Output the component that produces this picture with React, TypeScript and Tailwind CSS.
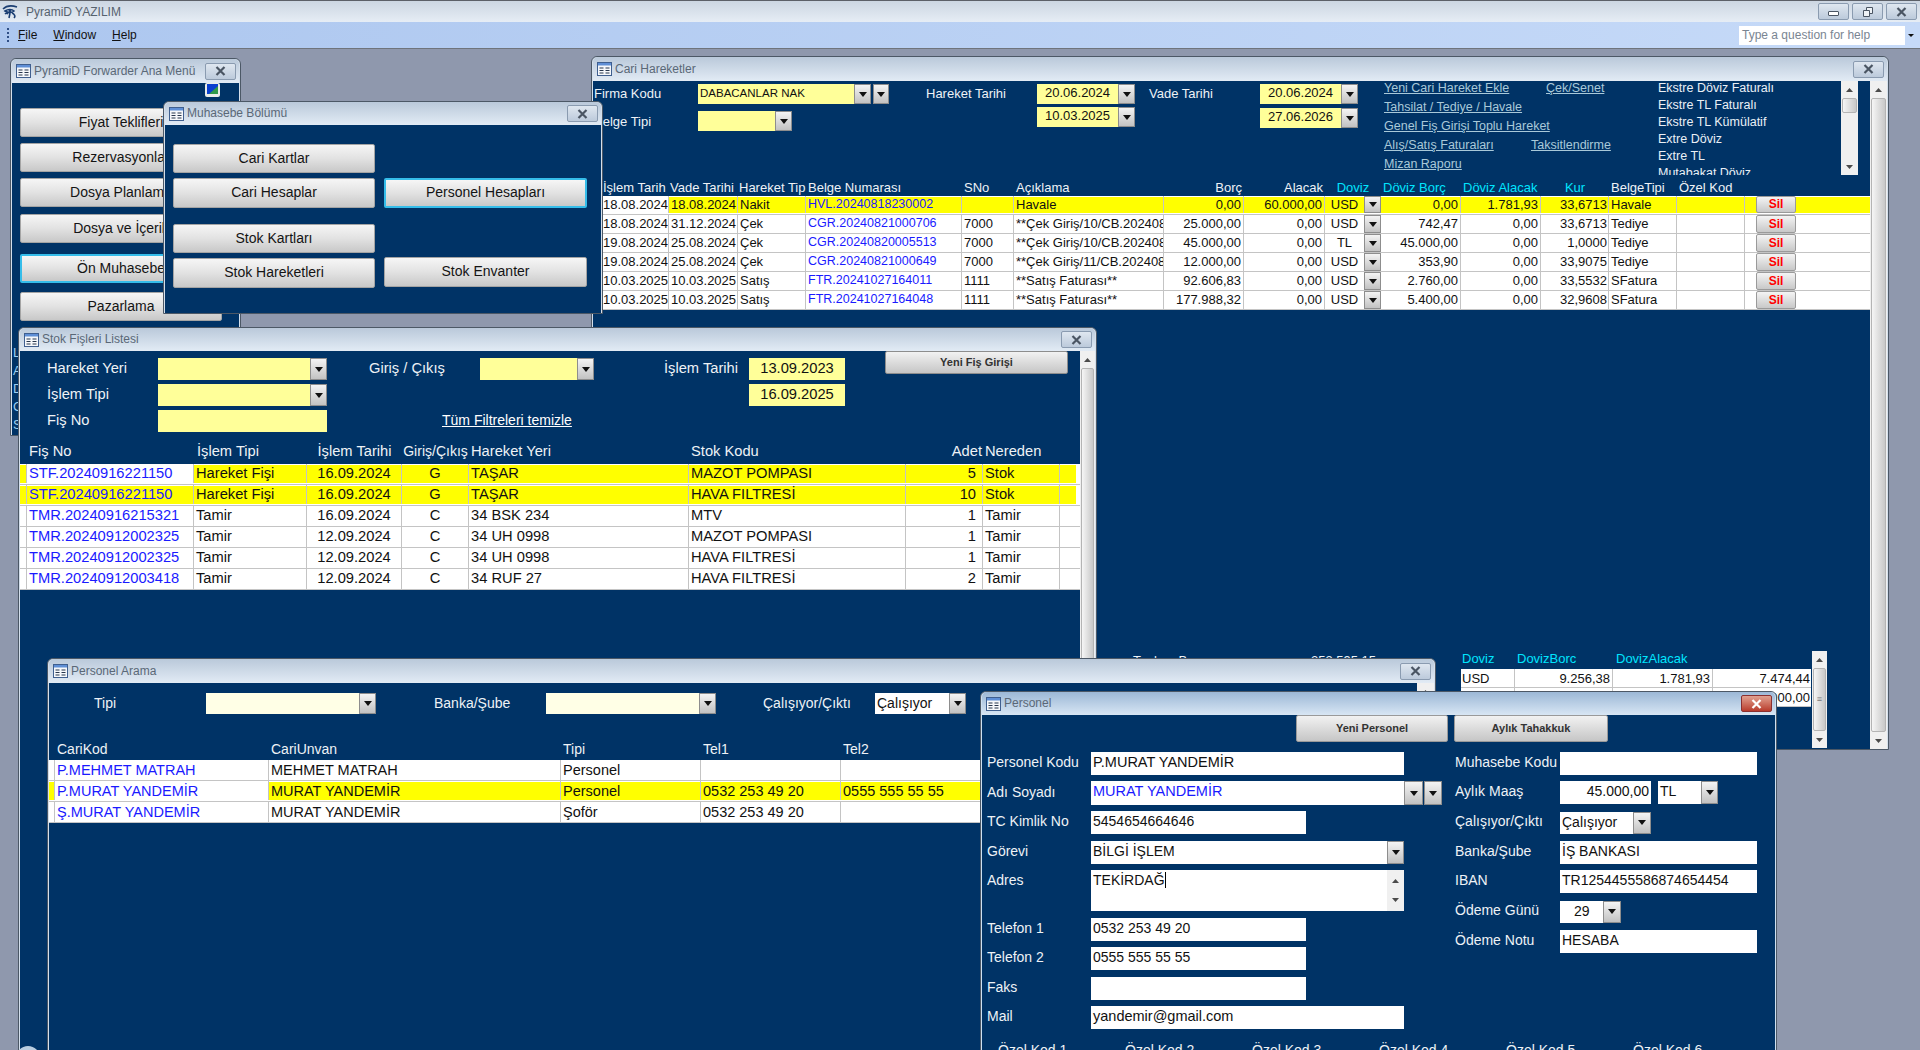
import type { ReactNode } from 'react';

const line = 'border-r border-[#c4c4c4]';

function Tri() {
    return (
        <svg width="8" height="5" viewBox="0 0 8 5">
            <path d="M0 0h8L4 5z" fill="#111" />
        </svg>
    );
}

function Drop({ className = 'w-[17px]' }: { className?: string }) {
    return (
        <div className={`flex shrink-0 items-center justify-center border border-[#8d8d8d] bg-gradient-to-b from-[#f4f4f4] to-[#c2c2c2] ${className}`}>
            <Tri />
        </div>
    );
}

function FormIcon() {
    return (
        <svg width="15" height="14" viewBox="0 0 15 14" className="shrink-0">
            <rect x="0.5" y="0.5" width="14" height="13" fill="#f6f8fb" stroke="#3f5f8f" />
            <rect x="1" y="1" width="13" height="2.5" fill="#5f8fd6" />
            <path d="M2.5 6h4M2.5 8.5h4M2.5 11h4M8.5 6h4M8.5 8.5h4M8.5 11h4" stroke="#27364d" />
        </svg>
    );
}

function AppIcon() {
    return (
        <svg width="16" height="14" viewBox="0 0 16 14">
            <path d="M1 4c3-3 8-4 14-2M3 6c3-2 7-2 9 0-2 2-6 2-9 0zM8 8l-1 5M10 8c2 1 4 3 2 5M3 9c1-1 2-1 3 0" fill="none" stroke="#1c3f73" strokeWidth="1.6" />
            <circle cx="8" cy="6" r="1.4" fill="#1c3f73" />
        </svg>
    );
}

function CloseBtn({ danger }: { danger?: boolean }) {
    return (
        <div className={`flex h-[17px] w-[31px] items-center justify-center rounded-[2px] border ${danger ? 'border-[#8a3030] bg-gradient-to-b from-[#e0a090] to-[#b83a2c]' : 'border-[#8a9bb0] bg-gradient-to-b from-[#dfe7f0] to-[#bccadb]'}`}>
            <svg width="11" height="10" viewBox="0 0 11 10">
                <path d="M1.5 1l8 8M9.5 1l-8 8" stroke={danger ? '#ffffff' : '#4a5563'} strokeWidth="2.2" />
            </svg>
        </div>
    );
}

function Win({ className, title, titleClass = 'h-[24px]', active, children }: { className: string; title: string; titleClass?: string; active?: boolean; children: ReactNode }) {
    return (
        <div className={`absolute flex flex-col rounded-t-[6px] border border-[#4c5866] px-px ${active ? 'bg-[#cfe0f0]' : 'bg-[#d4dfeb]'} ${className}`}>
            <div className={`flex shrink-0 items-center gap-[3px] rounded-t-[5px] bg-gradient-to-b pl-[4px] pr-[3px] text-[12px] text-[#5a6877] ${active ? 'from-[#9cb8d6] to-[#d8e6f4]' : 'from-[#bac9da] to-[#e2ebf5]'} ${titleClass}`}>
                <FormIcon />
                <span className="flex-1 pb-px">{title}</span>
                <CloseBtn danger={active} />
            </div>
            <div className="flex min-h-0 flex-1 overflow-hidden bg-[#003366]">{children}</div>
        </div>
    );
}

function Btn({ label, className, focus }: { label: string; className: string; focus?: boolean }) {
    return (
        <div className={`flex items-center justify-center overflow-hidden whitespace-nowrap rounded-[2px] bg-gradient-to-b from-[#f6f6f6] via-[#e2e2e2] to-[#c8c8c8] pb-px text-[14px] text-[#141414] ${focus ? 'border-2 border-[#35bdea]' : 'border border-[#a4a4a4]'} ${className}`}>
            {label}
        </div>
    );
}

function VScroll({ className, thumbClass, grip }: { className: string; thumbClass: string; grip?: boolean }) {
    return (
        <div className={`flex shrink-0 flex-col bg-[#f0f0f0] ${className}`}>
            <div className="flex h-[17px] shrink-0 items-center justify-center">
                <svg width="7" height="4" viewBox="0 0 7 4"><path d="M0 4h7L3.5 0z" fill="#4a4a4a" /></svg>
            </div>
            <div className="min-h-0 flex-1 px-px">
                <div className={`flex items-center justify-center rounded-[2px] border border-[#b4b4b4] bg-gradient-to-r from-[#f6f6f6] to-[#c8c8c8] text-[9px] leading-none text-[#777] ${thumbClass}`}>
                    {grip ? '≡' : ''}
                </div>
            </div>
            <div className="flex h-[17px] shrink-0 items-center justify-center">
                <svg width="7" height="4" viewBox="0 0 7 4"><path d="M0 0h7L3.5 4z" fill="#4a4a4a" /></svg>
            </div>
        </div>
    );
}

function Combo({ className, children, dropClass }: { className: string; children?: ReactNode; dropClass?: string }) {
    return (
        <div className={`flex overflow-hidden whitespace-nowrap ${className}`}>
            <div className="min-w-0 flex-1 overflow-hidden pl-[2px]">{children}</div>
            <Drop className={dropClass} />
        </div>
    );
}

function Row({ cols, h, hi, white = [], cells, cls }: { cols: string; h: string; hi?: boolean; white?: number[]; cells: ReactNode[]; cls: string[] }) {
    return (
        <div className={`border-b border-[#c4c4c4] bg-white ${h} ${hi ? 'py-px' : ''}`}>
            <div className={`grid h-full text-[#111] ${cols} ${hi ? 'bg-[#ffff00]' : 'bg-white'}`}>
                {cells.map((c, i) => (
                    <div key={i} className={`overflow-hidden whitespace-nowrap ${cls[i]} ${white.includes(i) ? 'bg-white' : ''} ${hi ? '-mt-px' : ''}`}>
                        {c}
                    </div>
                ))}
            </div>
        </div>
    );
}

const mainButtons = [
    { label: 'Fiyat Teklifleri', cls: 'mt-0' },
    { label: 'Rezervasyonlar', cls: 'mt-[6px]' },
    { label: 'Dosya Planlama', cls: 'mt-[6px]' },
    { label: 'Dosya ve İçerik', cls: 'mt-[7px]' },
    { label: 'Ön Muhasebe', cls: 'mt-[11px]', focus: true },
    { label: 'Pazarlama', cls: 'mt-[9px]' },
];

const cariCols = 'grid-cols-[67px_69px_68px_156px_52px_150px_80px_81px_39px_17px_80px_80px_68px_68px_68px_11px_40px_1fr]';
const cariCls = [
    `${line} pl-px`, `${line} pl-[2px]`, `${line} pl-[2px]`, `${line} pl-[2px] text-[12.5px] text-[#1a1aff]`, `${line} pl-[2px]`, `${line} pl-[2px]`,
    `${line} pr-[2px] text-right`, `${line} pr-[2px] text-right`, 'text-center', '', `${line} pr-[2px] text-right`, `${line} pr-[2px] text-right`,
    `${line} pr-px text-right`, `${line} pl-[2px]`, `${line}`, '', '', '',
];
const cariRows = [
    ['18.08.2024', '18.08.2024', 'Nakit', 'HVL.20240818230002', '', 'Havale', '0,00', '60.000,00', 'USD', '0,00', '1.781,93', '33,6713', 'Havale'],
    ['18.08.2024', '31.12.2024', 'Çek', 'CGR.20240821000706', '7000', '**Çek Giriş/10/CB.202408', '25.000,00', '0,00', 'USD', '742,47', '0,00', '33,6713', 'Tediye'],
    ['19.08.2024', '25.08.2024', 'Çek', 'CGR.20240820005513', '7000', '**Çek Giriş/10/CB.202408', '45.000,00', '0,00', 'TL', '45.000,00', '0,00', '1,0000', 'Tediye'],
    ['19.08.2024', '25.08.2024', 'Çek', 'CGR.20240821000649', '7000', '**Çek Giriş/11/CB.202408', '12.000,00', '0,00', 'USD', '353,90', '0,00', '33,9075', 'Tediye'],
    ['10.03.2025', '10.03.2025', 'Satış', 'FTR.20241027164011', '1111', '**Satış Faturası**', '92.606,83', '0,00', 'USD', '2.760,00', '0,00', '33,5532', 'SFatura'],
    ['10.03.2025', '10.03.2025', 'Satış', 'FTR.20241027164048', '1111', '**Satış Faturası**', '177.988,32', '0,00', 'USD', '5.400,00', '0,00', '32,9608', 'SFatura'],
];
const extreList = ['Ekstre Döviz Faturalı', 'Ekstre TL Faturalı', 'Ekstre TL Kümülatif', 'Extre Döviz', 'Extre TL', 'Mutabakat Döviz'];

const stokCols = 'grid-cols-[7px_167px_113px_95px_67px_220px_217px_77px_77px_16px_4px]';
const stokCls = [
    line, `${line} pl-[2px] text-[#1a1aff]`, `${line} pl-[2px]`, `${line} text-center`, `${line} text-center`, `${line} pl-[2px]`,
    `${line} pl-[2px]`, `${line} pr-[6px] text-right`, `${line} pl-[2px]`, '', '',
];
const stokRows = [
    ['', 'STF.20240916221150', 'Hareket Fişi', '16.09.2024', 'G', 'TAŞAR', 'MAZOT POMPASI', '5', 'Stok'],
    ['', 'STF.20240916221150', 'Hareket Fişi', '16.09.2024', 'G', 'TAŞAR', 'HAVA FILTRESİ', '10', 'Stok'],
    ['', 'TMR.20240916215321', 'Tamir', '16.09.2024', 'C', '34 BSK 234', 'MTV', '1', 'Tamir'],
    ['', 'TMR.20240912002325', 'Tamir', '12.09.2024', 'C', '34 UH 0998', 'MAZOT POMPASI', '1', 'Tamir'],
    ['', 'TMR.20240912002325', 'Tamir', '12.09.2024', 'C', '34 UH 0998', 'HAVA FILTRESİ', '1', 'Tamir'],
    ['', 'TMR.20240912003418', 'Tamir', '12.09.2024', 'C', '34 RUF 27', 'HAVA FILTRESİ', '2', 'Tamir'],
];

const aramaCols = 'grid-cols-[6px_214px_292px_140px_140px_1fr]';
const aramaCls = [line, `${line} pl-[2px] text-[#1a1aff]`, `${line} pl-[2px]`, `${line} pl-[2px]`, `${line} pl-[2px]`, 'pl-[2px]'];
const aramaRows = [
    ['', 'P.MEHMET MATRAH', 'MEHMET MATRAH', 'Personel', '', ''],
    ['', 'P.MURAT YANDEMİR', 'MURAT YANDEMİR', 'Personel', '0532 253 49 20', '0555 555 55 55'],
    ['', 'Ş.MURAT YANDEMİR', 'MURAT YANDEMİR', 'Şoför', '0532 253 49 20', ''],
];

const field = 'flex h-[23px] items-center bg-white pb-[2px] pl-[2px] text-[#111]';

function AnaMenu() {
    return (
        <Win className="left-[10px] top-[9px] h-[378px] w-[231px]" title="PyramiD Forwarder Ana Menü">
            <div className="flex w-full flex-col pl-[8px]">
                <div className="h-[25px] pl-[185px]">
                    <svg width="15" height="14" viewBox="0 0 15 14">
                        <rect width="15" height="14" rx="2" fill="#e8ece8" />
                        <rect x="2" y="1" width="11" height="10" fill="#0a3fd0" />
                        <path d="M13 3v8H4z" fill="#2f9a4a" />
                    </svg>
                </div>
                {mainButtons.map((b) => (
                    <Btn key={b.label} label={b.label} focus={b.focus} className={`h-[29px] w-[202px] ${b.cls}`} />
                ))}
                <div className="-ml-[8px] mt-[23px] flex flex-col text-[13px] leading-[18px] text-[#9fd0f0]">
                    {['L', 'A', 'D', 'G', 'S'].map((l) => (
                        <span key={l} className="pl-px">{l}</span>
                    ))}
                </div>
            </div>
        </Win>
    );
}

function Muhasebe() {
    return (
        <Win className="left-[163px] top-[52px] h-[213px] w-[440px]" title="Muhasebe Bölümü" titleClass="h-[23px]">
            <div className="flex flex-col pl-[8px] pt-[19px]">
                <Btn label="Cari Kartlar" className="h-[29px] w-[202px]" />
                <div className="mt-[5px] flex gap-[9px]">
                    <Btn label="Cari Hesaplar" className="h-[30px] w-[202px]" />
                    <Btn label="Personel Hesapları" focus className="h-[30px] w-[203px]" />
                </div>
                <Btn label="Stok Kartları" className="mt-[16px] h-[29px] w-[202px]" />
                <div className="mt-[4px] flex items-start gap-[9px]">
                    <Btn label="Stok Hareketleri" className="mt-px h-[30px] w-[202px]" />
                    <Btn label="Stok Envanter" className="h-[30px] w-[203px]" />
                </div>
            </div>
        </Win>
    );
}

function CariHareketler() {
    const linkCls = 'underline text-[#a9c9d9]';
    return (
        <Win className="left-[591px] top-[7px] h-[694px] w-[1298px]" title="Cari Hareketler">
            <div className="flex min-w-0 flex-1 flex-col text-[13px]">
                <div className="flex h-[94px] shrink-0 text-[#eef2f6]">
                    <div className="w-[105px] pl-px">
                        <div className="mt-[3px]">Firma Kodu</div>
                        <div className="mt-[8px]">Belge Tipi</div>
                    </div>
                    <div className="w-[228px] pt-[3px] text-[#111]">
                        <div className="flex h-[20px] w-[191px]">
                            <div className="flex-1 overflow-hidden whitespace-nowrap bg-[#ffff99] pl-[2px] text-[11.5px] leading-[19px]">DABACANLAR NAK</div>
                            <Drop />
                            <Drop className="ml-[2px] w-[16px]" />
                        </div>
                        <Combo className="mt-[7px] h-[20px] w-[94px] bg-[#ffff99]" />
                    </div>
                    <div className="w-[111px] pt-[3px]">Hareket Tarihi</div>
                    <div className="w-[112px] pt-[3px] text-[#111]">
                        <Combo className="h-[20px] w-[98px] bg-[#ffff99] pl-[6px] leading-[18px]">20.06.2024</Combo>
                        <Combo className="mt-[3px] h-[20px] w-[98px] bg-[#ffff99] pl-[6px] leading-[18px]">10.03.2025</Combo>
                    </div>
                    <div className="w-[111px] pt-[3px]">Vade Tarihi</div>
                    <div className="w-[124px] pt-[3px] text-[#111]">
                        <Combo className="h-[20px] w-[98px] bg-[#ffff99] pl-[6px] leading-[18px]">20.06.2024</Combo>
                        <Combo className="mt-[4px] h-[20px] w-[98px] bg-[#ffff99] pl-[6px] leading-[18px]">27.06.2026</Combo>
                    </div>
                    <div className="-mt-[2px] flex w-[274px] flex-col text-[12.5px] leading-[19px]">
                        <div className="flex">
                            <span className={`w-[162px] ${linkCls}`}>Yeni Cari Hareket Ekle</span>
                            <span className={linkCls}>Çek/Senet</span>
                        </div>
                        <span className={linkCls}>Tahsilat / Tediye / Havale</span>
                        <span className={linkCls}>Genel Fiş Girişi Toplu Hareket</span>
                        <div className="flex">
                            <span className={`w-[147px] ${linkCls}`}>Alış/Satış Faturaları</span>
                            <span className={linkCls}>Taksitlendirme</span>
                        </div>
                        <span className={linkCls}>Mizan Raporu</span>
                    </div>
                    <div className="flex h-[94px] w-[183px] flex-col overflow-hidden text-[12.5px] leading-[17px] text-[#eaf0f6]">
                        {extreList.map((t) => (
                            <span key={t} className="-mt-px mb-px whitespace-nowrap">{t}</span>
                        ))}
                    </div>
                    <VScroll className="h-[94px] w-[17px]" thumbClass="h-[15px]" />
                </div>
                <div className={`ml-[9px] grid h-[21px] shrink-0 items-end leading-[16px] text-[#eef2f6] ${cariCols}`}>
                    <span className="pl-px">İşlem Tarih</span>
                    <span className="overflow-hidden whitespace-nowrap pl-px">Vade Tarihi</span>
                    <span className="overflow-hidden whitespace-nowrap pl-px">Hareket Tip</span>
                    <span className="pl-[2px]">Belge Numarası</span>
                    <span className="pl-[2px]">SNo</span>
                    <span className="pl-[2px]">Açıklama</span>
                    <span className="pr-[2px] text-right">Borç</span>
                    <span className="pr-[2px] text-right">Alacak</span>
                    <span className="col-span-2 text-center text-[#00e5ff]">Doviz</span>
                    <span className="pl-[2px] text-[#00e5ff]">Döviz Borç</span>
                    <span className="pl-[2px] text-[#00e5ff]">Döviz Alacak</span>
                    <span className="text-center text-[#00e5ff]">Kur</span>
                    <span className="pl-[2px]">BelgeTipi</span>
                    <span className="pl-[2px]">Özel Kod</span>
                </div>
                <div className="ml-[9px] shrink-0 leading-[17px]">
                    {cariRows.map((r, i) => {
                        const cells: ReactNode[] = [
                            ...r.slice(0, 9),
                            <Drop key="d" className="h-full w-[17px]" />,
                            ...r.slice(9),
                            '',
                            '',
                            <div key="s" className="flex h-full items-center justify-center rounded-[2px] border border-[#9a9a9a] bg-gradient-to-b from-[#f4f4f4] to-[#c8c8c8] text-[12px] font-bold text-[#ff0000]">Sil</div>,
                            '',
                        ];
                        return <Row key={i} cols={cariCols} h="h-[19px]" hi={i === 0} white={[0]} cells={cells} cls={cariCls} />;
                    })}
                </div>
                <div className="mt-[341px] flex h-[97px] shrink-0 text-[#eef2f6]">
                    <span className="ml-[540px] w-[178px]">Toplam Borç</span>
                    <span className="w-[150px]">253.595,15</span>
                    <div className="w-[350px]">
                        <div className="grid h-[18px] grid-cols-[54px_98px_100px_98px] leading-[16px] text-[#00e5ff]">
                            <span className="pl-px">Doviz</span>
                            <span className="pl-[2px]">DovizBorc</span>
                            <span className="pl-[3px]">DovizAlacak</span>
                            <span />
                        </div>
                        <Row cols="grid-cols-[54px_98px_100px_98px]" h="h-[19px]" cells={['USD', '9.256,38', '1.781,93', '7.474,44']} cls={[`${line} pl-px`, `${line} pr-[2px] text-right`, `${line} pr-[2px] text-right`, 'pr-px text-right']} />
                        <Row cols="grid-cols-[54px_98px_100px_98px]" h="h-[19px]" cells={['', '', '', '45.000,00']} cls={[line, line, line, 'pr-px text-right']} />
                    </div>
                    <VScroll className="ml-px h-[97px] w-[15px]" thumbClass="h-full" grip />
                </div>
            </div>
            <VScroll className="w-[17px]" thumbClass="h-full" />
        </Win>
    );
}

function StokFisleri() {
    return (
        <Win className="left-[18px] top-[278px] h-[800px] w-[1079px]" title="Stok Fişleri Listesi" titleClass="h-[23px]">
            <div className="flex min-w-0 flex-1 flex-col text-[14.7px]">
                <div className="grid auto-rows-[22px] grid-cols-[111px_169px_42px_111px_114px_70px_85px_96px_40px_183px] items-center gap-y-[4px] pl-[27px] pt-[7px] text-[#eef2f6]">
                    <span className="pb-[2px]">Hareket Yeri</span>
                    <Combo className="h-[22px] bg-[#ffff99]" />
                    <span className="col-start-4 pb-[2px]">Giriş / Çıkış</span>
                    <Combo className="h-[22px] bg-[#ffff99]" />
                    <span className="col-start-7 pb-[2px]">İşlem Tarihi</span>
                    <div className="flex h-[22px] items-center justify-center bg-[#ffff99] pb-[2px] text-[#111]">13.09.2023</div>
                    <div className="col-start-10 -mt-[7px] flex h-[23px] self-start items-center justify-center rounded-[2px] border border-[#8d8d8d] bg-gradient-to-b from-[#f2f2f2] to-[#c6c6c6] text-[11px] font-bold text-[#333]">Yeni Fiş Girişi</div>
                    <span className="col-start-1 pb-[2px]">İşlem Tipi</span>
                    <Combo className="col-start-2 h-[22px] bg-[#ffff99]" />
                    <div className="col-start-8 flex h-[22px] items-center justify-center bg-[#ffff99] pb-[2px] text-[#111]">16.09.2025</div>
                    <span className="col-start-1 pb-[2px]">Fiş No</span>
                    <div className="col-start-2 h-[22px] bg-[#ffff99]" />
                    <span className="col-span-3 col-start-4 pb-[2px] pl-[73px] text-[14px] text-white underline">Tüm Filtreleri temizle</span>
                </div>
                <div className={`mt-[8px] grid h-[24px] shrink-0 items-center pb-[2px] text-[#eef2f6] ${stokCols}`}>
                    <span />
                    <span className="pl-[2px]">Fiş No</span>
                    <span className="pl-[3px]">İşlem Tipi</span>
                    <span className="text-center">İşlem Tarihi</span>
                    <span className="overflow-hidden whitespace-nowrap text-center text-[14px]">Giriş/Çıkış</span>
                    <span className="pl-[2px]">Hareket Yeri</span>
                    <span className="pl-[2px]">Stok Kodu</span>
                    <span className="pr-px text-right">Adet</span>
                    <span className="whitespace-nowrap pl-[2px]">Nereden</span>
                </div>
                <div className="shrink-0 leading-[18px]">
                    {stokRows.map((r, i) => (
                        <Row key={i} cols={stokCols} h="h-[21px]" hi={i < 2} white={i === 0 ? [1, 10] : i === 1 ? [10] : []} cells={[...r, '', '']} cls={stokCls} />
                    ))}
                </div>
            </div>
            <VScroll className="w-[15px]" thumbClass="h-full" />
        </Win>
    );
}

function PersonelArama() {
    return (
        <Win className="left-[47px] top-[609px] h-[420px] w-[1389px]" title="Personel Arama">
            <div className="flex min-w-0 flex-1 flex-col text-[14px]">
                <div className="mt-[10px] flex h-[21px] shrink-0 items-center text-[#eef2f6]">
                    <span className="ml-[45px] w-[112px]">Tipi</span>
                    <Combo className="h-[21px] w-[170px] bg-[#ffffe6]" />
                    <span className="ml-[58px] w-[112px]">Banka/Şube</span>
                    <Combo className="h-[21px] w-[170px] bg-[#ffffe6]" />
                    <span className="ml-[47px] w-[112px]">Çalışıyor/Çıktı</span>
                    <Combo className="h-[21px] w-[91px] bg-white leading-[20px] text-[#111]">Çalışıyor</Combo>
                </div>
                <div className={`mt-[25px] grid h-[21px] shrink-0 items-center text-[#eef2f6] ${aramaCols}`}>
                    <span />
                    <span className="pl-[2px]">CariKod</span>
                    <span className="pl-[2px]">CariUnvan</span>
                    <span className="pl-[2px]">Tipi</span>
                    <span className="pl-[2px]">Tel1</span>
                    <span className="pl-[2px]">Tel2</span>
                </div>
                <div className="shrink-0 text-[14.5px] leading-[20px]">
                    {aramaRows.map((r, i) => (
                        <Row key={i} cols={aramaCols} h="h-[21px]" hi={i === 1} white={i === 1 ? [1] : []} cells={r} cls={aramaCls} />
                    ))}
                </div>
            </div>
            <VScroll className="w-[17px]" thumbClass="h-full" />
        </Win>
    );
}

function Label({ children }: { children: ReactNode }) {
    return <span className="w-[104px] shrink-0 whitespace-nowrap pb-[2px] text-[#eef2f6]">{children}</span>;
}

function Personel() {
    return (
        <Win className="left-[980px] top-[642px] h-[370px] w-[797px]" title="Personel" titleClass="h-[23px]" active>
            <div className="flex min-w-0 flex-1 flex-col text-[14px]">
                <div className="flex gap-[6px] pl-[314px]">
                    <div className="flex h-[27px] w-[152px] items-center justify-center rounded-[2px] border border-[#9a9a9a] bg-gradient-to-b from-[#f2f2f2] to-[#c6c6c6] text-[11px] font-bold text-[#333]">Yeni Personel</div>
                    <div className="flex h-[27px] w-[154px] items-center justify-center rounded-[2px] border border-[#9a9a9a] bg-gradient-to-b from-[#f2f2f2] to-[#c6c6c6] text-[11px] font-bold text-[#333]">Aylık Tahakkuk</div>
                </div>
                <div className="mt-[10px] flex">
                    <div className="flex w-[473px] flex-col pl-[5px]">
                        <div className="flex items-center">
                            <Label>Personel Kodu</Label>
                            <div className={`${field} w-[313px] text-[14.5px]`}>P.MURAT YANDEMİR</div>
                        </div>
                        <div className="mt-[6px] flex h-[24px] items-center">
                            <Label>Adı Soyadı</Label>
                            <div className="flex h-[24px] w-[313px] items-center bg-white pb-[2px] pl-[2px] text-[14.5px] text-[#1a1aff]">MURAT YANDEMİR</div>
                            <Drop className="h-[24px] w-[19px]" />
                            <Drop className="ml-px h-[24px] w-[18px]" />
                        </div>
                        <div className="mt-[6px] flex items-center">
                            <Label>TC Kimlik No</Label>
                            <div className={`${field} w-[215px]`}>5454654664646</div>
                        </div>
                        <div className="mt-[7px] flex items-center">
                            <Label>Görevi</Label>
                            <Combo className="h-[23px] w-[313px] bg-white leading-[20px] text-[#111]">BİLGİ İŞLEM</Combo>
                        </div>
                        <div className="mt-[6px] flex items-start">
                            <Label><span className="leading-[20px]">Adres</span></Label>
                            <div className="flex h-[41px] w-[313px] bg-white text-[#111]">
                                <div className="flex-1 pl-[2px] leading-[20px]">
                                    TEKİRDAĞ<span className="border-l border-black" />
                                </div>
                                <div className="flex w-[17px] flex-col items-center justify-between bg-[#f0f0f0] py-[9px]">
                                    <svg width="7" height="4" viewBox="0 0 7 4"><path d="M0 4h7L3.5 0z" fill="#4a4a4a" /></svg>
                                    <svg width="7" height="4" viewBox="0 0 7 4"><path d="M0 0h7L3.5 4z" fill="#4a4a4a" /></svg>
                                </div>
                            </div>
                        </div>
                        <div className="mt-[7px] flex items-center">
                            <Label>Telefon 1</Label>
                            <div className={`${field} w-[215px]`}>0532 253 49 20</div>
                        </div>
                        <div className="mt-[6px] flex items-center">
                            <Label>Telefon 2</Label>
                            <div className={`${field} w-[215px]`}>0555 555 55 55</div>
                        </div>
                        <div className="mt-[7px] flex items-center">
                            <Label>Faks</Label>
                            <div className={`${field} w-[215px]`} />
                        </div>
                        <div className="mt-[6px] flex items-center">
                            <Label>Mail</Label>
                            <div className={`${field} w-[313px] text-[14.5px]`}>yandemir@gmail.com</div>
                        </div>
                    </div>
                    <div className="flex flex-col">
                        <div className="flex items-center">
                            <Label>Muhasebe Kodu</Label>
                            <div className={`${field} ml-px w-[197px]`} />
                        </div>
                        <div className="mt-[6px] flex items-center">
                            <Label>Aylık Maaş</Label>
                            <div className={`${field} ml-px w-[91px] justify-end pr-[2px]`}>45.000,00</div>
                            <Combo className="ml-[7px] h-[23px] w-[60px] bg-white leading-[20px] text-[#111]">TL</Combo>
                        </div>
                        <div className="mt-[7px] flex items-center">
                            <Label>Çalışıyor/Çıktı</Label>
                            <Combo className="ml-px h-[22px] w-[91px] bg-white leading-[20px] text-[#111]" dropClass="w-[18px]">Çalışıyor</Combo>
                        </div>
                        <div className="mt-[7px] flex items-center">
                            <Label>Banka/Şube</Label>
                            <div className={`${field} ml-px w-[197px]`}>İŞ BANKASI</div>
                        </div>
                        <div className="mt-[6px] flex items-center">
                            <Label>IBAN</Label>
                            <div className={`${field} ml-px w-[197px]`}>TR1254455586874654454</div>
                        </div>
                        <div className="mt-[7px] flex items-center">
                            <Label>Ödeme Günü</Label>
                            <Combo className="ml-px h-[22px] w-[61px] bg-white pl-[12px] leading-[20px] text-[#111]" dropClass="w-[18px]">29</Combo>
                        </div>
                        <div className="mt-[7px] flex items-center">
                            <Label>Ödeme Notu</Label>
                            <div className={`${field} ml-px w-[197px]`}>HESABA</div>
                        </div>
                    </div>
                </div>
                <div className="mt-[11px] flex pl-[16px] text-[#eef2f6]">
                    {['Özel Kod 1', 'Özel Kod 2', 'Özel Kod 3', 'Özel Kod 4', 'Özel Kod 5', 'Özel Kod 6'].map((t) => (
                        <span key={t} className="w-[127px]">{t}</span>
                    ))}
                </div>
            </div>
        </Win>
    );
}

export default function App() {
    return (
        <div className="flex h-[1050px] w-[1920px] flex-col overflow-hidden bg-[#8f98ad] font-['Liberation_Sans',Arial,sans-serif]">
            {/* Title bar */}
            <div className="flex h-[22px] shrink-0 items-center border-t border-[#5c6068] bg-gradient-to-b from-[#ccd6e2] to-[#e6edf5] pl-[2px] pr-[3px] text-[12px] text-[#56626f]">
                <AppIcon />
                <span className="ml-[8px] flex-1">PyramiD YAZILIM</span>
                <div className="flex gap-[3px]">
                    <div className="flex h-[17px] w-[31px] items-center justify-center rounded-[2px] border border-[#8a9bb0] bg-gradient-to-b from-[#dfe7f0] to-[#bccadb]">
                        <div className="mt-[3px] h-[5px] w-[11px] rounded-[1px] border border-[#4a5563] bg-white" />
                    </div>
                    <div className="flex h-[17px] w-[31px] items-center justify-center rounded-[2px] border border-[#8a9bb0] bg-gradient-to-b from-[#dfe7f0] to-[#bccadb]">
                        <svg width="12" height="12" viewBox="0 0 12 12">
                            <path d="M4.5 4V1.5h6v6H8M1.5 4.5h6v6h-6z" fill="#eef2f6" stroke="#4a5563" />
                        </svg>
                    </div>
                    <CloseBtn />
                </div>
            </div>
            {/* Menu */}
            <div className="flex h-[26px] shrink-0 items-center bg-gradient-to-r from-[#adc7ef] to-[#c6daf8] text-[12px] text-[#111]">
                <div className="ml-[7px] flex h-[14px] w-[2px] flex-col justify-between">
                    {[0, 1, 2, 3].map((i) => (
                        <span key={i} className="h-[2px] w-[2px] bg-[#2f4f86]" />
                    ))}
                </div>
                <span className="ml-[9px]"><u>F</u>ile</span>
                <span className="ml-[16px]"><u>W</u>indow</span>
                <span className="ml-[16px]"><u>H</u>elp</span>
                <div className="ml-auto mr-[4px] flex h-[19px] w-[177px] items-center bg-white pl-[3px] text-[12px] text-[#7a8592]">
                    <span className="flex-1">Type a question for help</span>
                    <div className="flex h-full w-[11px] items-center justify-center bg-[#c6daf8]">
                        <svg width="6" height="3" viewBox="0 0 6 3"><path d="M0 0h6L3 3z" fill="#111" /></svg>
                    </div>
                </div>
            </div>
            {/* MDI area */}
            <div className="relative min-h-0 flex-1 overflow-hidden border-t border-[#6f747c]">
                <AnaMenu />
                <CariHareketler />
                <Muhasebe />
                <StokFisleri />
                <PersonelArama />
                <Personel />
                <div className="absolute bottom-[-20px] left-[16px] h-[24px] w-[24px] rounded-full bg-[#b9cde0]" />
            </div>
        </div>
    );
}
